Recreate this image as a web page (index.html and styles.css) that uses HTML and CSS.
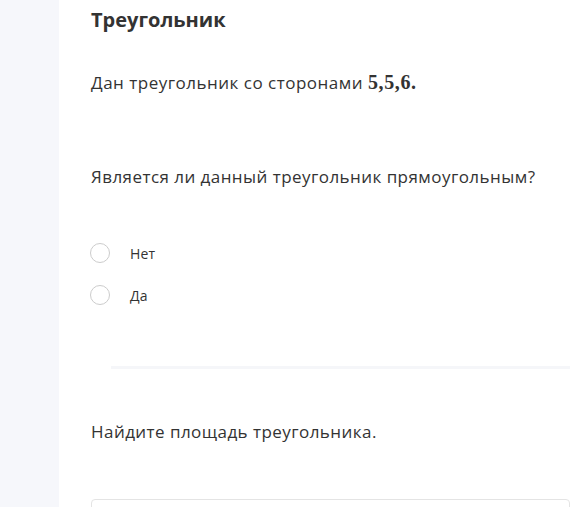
FILE: index.html
```html
<!DOCTYPE html>
<html lang="ru">
<head>
  <meta charset="UTF-8">
  <meta name="viewport" content="width=device-width, initial-scale=1.0">
  <title>Треугольник</title>
  <link rel="stylesheet" href="styles.css">
</head>
<body>
  <div class="page">
    <aside class="sidebar"></aside>

    <main class="task">
      <h1 class="task-title">Треугольник</h1>
      <p class="task-text">Дан треугольник со сторонами <span class="math">5,5,6.</span></p>

      <div class="question">
        <p class="question-text">Является ли данный треугольник прямоугольным?</p>
        <ul class="options">
          <li class="option"><span class="radio"></span><span class="option-label">Нет</span></li>
          <li class="option"><span class="radio"></span><span class="option-label">Да</span></li>
        </ul>
      </div>

      <div class="divider"></div>

      <div class="question">
        <p class="question-text second">Найдите площадь треугольника.</p>
        <div class="answer-box"></div>
      </div>
    </main>
  </div>
</body>
</html>
```

FILE: styles.css
```css
/* Общие стили */
body {
  margin: 0;
  font-family: "Open Sans", Lato, sans-serif;
  color: #333333;
  background-color: #ffffff;
  overflow: hidden;
}

.page {
  display: flex;
  height: 507px;
  overflow: hidden;
}

.sidebar {
  width: 59px;
  flex-shrink: 0;
  background-color: #f6f7fb;
}

.task {
  flex: 1;
  padding-left: 32px;
}

/* Заголовок и условие */
.task-title {
  margin: 7px 0 0;
  font-size: 20px;
  line-height: 26px;
  font-weight: 700;
}

.task-text {
  margin: 37px 0 0;
  font-size: 17px;
  line-height: 24px;
  letter-spacing: 0.5px;
}

.math {
  font-family: "Liberation Serif", serif;
  font-size: 20px;
  font-weight: 700;
  letter-spacing: 0.6px;
}

/* Вопросы */
.question-text {
  margin: 70px 0 0;
  font-size: 17px;
  line-height: 24px;
  letter-spacing: 0.45px;
}

.question-text.second {
  margin-top: 51px;
}

.options {
  list-style: none;
  margin: 52px 0 0;
  padding: 0;
}

.option {
  display: flex;
  align-items: center;
  height: 24px;
  margin-bottom: 18px;
  font-size: 14px;
  letter-spacing: 0.2px;
}

.radio {
  width: 18px;
  height: 18px;
  border: 1px solid #cccccc;
  border-radius: 50%;
  margin-left: -1px;
  margin-right: 20px;
}

/* Разделитель */
.divider {
  height: 3px;
  margin: 59px 0 0 20px;
  background-color: #f5f6f9;
}

.answer-box {
  margin-top: 55px;
  height: 40px;
  border: 1px solid #e4e4e4;
  border-radius: 4px;
}
```
